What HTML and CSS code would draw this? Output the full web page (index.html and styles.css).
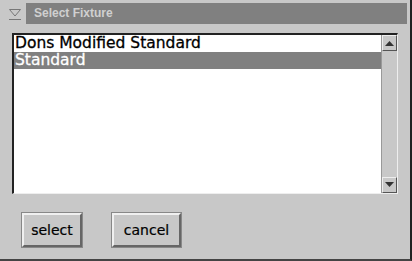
FILE: index.html
```html
<!DOCTYPE html>
<html lang="en">
<head>
  <meta charset="UTF-8" />
  <title>Select Fixture</title>
  <link rel="stylesheet" href="styles.css">
</head>
<body>
  <div class="window">
    <div class="titlebar">
      <div class="menu-btn">
        <svg width="14" height="14" viewBox="0 0 14 14">
          <path d="M1.5 2.5 H12.5 L7 9 Z" fill="none" stroke="#777" stroke-width="1"/>
          <path d="M1 12.5 H13" stroke="#777" stroke-width="1"/>
        </svg>
      </div>
      <div class="title">Select Fixture</div>
    </div>

    <div class="content">
      <div class="listbox">
        <ul class="items">
          <li>Dons Modified Standard</li>
          <li class="selected">Standard</li>
        </ul>
        <div class="scrollbar">
          <div class="arrow up">
            <svg width="9" height="6" viewBox="0 0 9 6"><path d="M0 6 L4.5 1 L9 6 Z" fill="#333"/></svg>
          </div>
          <div class="track"></div>
          <div class="arrow down">
            <svg width="9" height="6" viewBox="0 0 9 6"><path d="M0 0 H9 L4.5 5 Z" fill="#333"/></svg>
          </div>
        </div>
      </div>

      <div class="actions">
        <button class="btn btn-select">select</button>
        <button class="btn btn-cancel">cancel</button>
      </div>
    </div>
  </div>
</body>
</html>
```

FILE: styles.css
```css
* { box-sizing: border-box; }
body {
  margin: 0;
  width: 412px;
  height: 261px;
  overflow: hidden;
  background: #c8c8c8;
  font-family: 'DejaVu Sans', sans-serif;
}
.window {
  width: 412px;
  height: 261px;
  background: #c8c8c8;
  border-right: 2px solid #222;
  border-bottom: 2px solid #444;
  padding: 3px 2px 0 3px;
}
.titlebar {
  display: flex;
  height: 21px;
}
.menu-btn {
  width: 23px;
  display: flex;
  align-items: center;
  justify-content: center;
  background: #c8c8c8;
}
.title {
  flex: 1;
  background: #808080;
  color: #d0d0d0;
  font-family: 'Liberation Sans', Arial, sans-serif;
  font-weight: bold;
  font-size: 12px;
  line-height: 21px;
  padding-left: 8px;
  margin-right: 1px;
}
.content {
  padding: 9px 0 0 9px;
}
.listbox {
  display: flex;
  width: 386px;
  height: 161px;
  border-top: 2px solid #222;
  border-left: 2px solid #222;
  border-right: 1px solid #eee;
  border-bottom: 1px solid #eee;
  background: #fff;
}
.items {
  flex: 1;
  list-style: none;
  margin: 0;
  padding: 0;
}
.items li {
  height: 17px;
  line-height: 17px;
  padding-left: 1px;
  font-size: 15.5px;
  color: #000;
  -webkit-text-stroke: 0.3px currentColor;
}
.items li.selected {
  background: #808080;
  color: #fff;
}
.scrollbar {
  width: 16px;
  display: flex;
  flex-direction: column;
  background: #c8c8c8;
  border-left: 1px solid #999;
}
.arrow {
  height: 16px;
  display: flex;
  align-items: center;
  justify-content: center;
  border: 1px solid;
  border-color: #eee #555 #555 #eee;
}
.track { flex: 1; }
.actions {
  display: flex;
  gap: 30px;
  padding: 19px 0 0 10px;
}
.btn {
  height: 34px;
  padding: 0;
  background: #c8c8c8;
  border: 2px solid;
  border-color: #f0f0f0 #666 #666 #f0f0f0;
  outline: 1px solid #888;
  font-family: 'DejaVu Sans', sans-serif;
  font-size: 14px;
  color: #000;
  -webkit-text-stroke: 0.2px currentColor;
}
.btn-select { width: 60px; }
.btn-cancel { width: 69px; }
```
